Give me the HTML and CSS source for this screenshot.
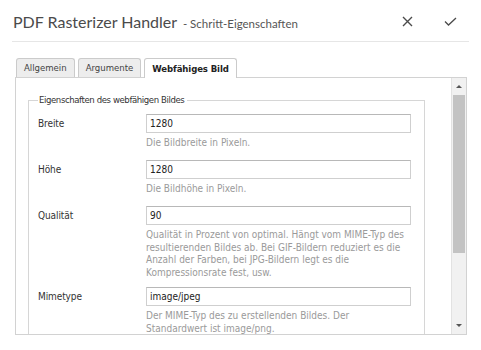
FILE: index.html
```html
<!DOCTYPE html>
<html>
<head>
<meta charset="utf-8">
<link rel="stylesheet" href="styles.css">
</head>
<body>
<div class="dialog-header">
  <div class="dialog-title">
    PDF Rasterizer Handler <span class="dialog-subtitle">- Schritt-Eigenschaften</span>
  </div>
  <div class="dialog-actions">
    <span class="dialog-btn">
      <svg width="11" height="11" viewBox="0 0 11 11"><path d="M1 1 L10 10 M10 1 L1 10" stroke="#4b4b4b" stroke-width="1.4" fill="none"/></svg>
    </span>
    <span class="dialog-btn">
      <svg width="13" height="9" viewBox="0 0 13 9"><path d="M1 4.5 L4.5 8 L12 1" stroke="#4b4b4b" stroke-width="1.3" fill="none"/></svg>
    </span>
  </div>
</div>

<div class="tabs">
  <div class="tab">Allgemein</div>
  <div class="tab">Argumente</div>
  <div class="tab tab-active">Webfähiges Bild</div>
</div>

<div class="panel">
  <div class="panel-content">
    <fieldset class="group">
      <legend class="group-legend">Eigenschaften des webfähigen Bildes</legend>

      <div class="field">
        <label class="field-label">Breite</label>
        <div class="field-body">
          <input class="field-input" type="text" value="1280">
          <div class="field-help">Die Bildbreite in Pixeln.</div>
        </div>
      </div>

      <div class="field">
        <label class="field-label">Höhe</label>
        <div class="field-body">
          <input class="field-input" type="text" value="1280">
          <div class="field-help">Die Bildhöhe in Pixeln.</div>
        </div>
      </div>

      <div class="field">
        <label class="field-label">Qualität</label>
        <div class="field-body">
          <input class="field-input" type="text" value="90">
          <div class="field-help">Qualität in Prozent von optimal. Hängt vom MIME-Typ des<br>resultierenden Bildes ab. Bei GIF-Bildern reduziert es die<br>Anzahl der Farben, bei JPG-Bildern legt es die<br>Kompressionsrate fest, usw.</div>
        </div>
      </div>

      <div class="field">
        <label class="field-label">Mimetype</label>
        <div class="field-body">
          <input class="field-input" type="text" value="image/jpeg">
          <div class="field-help">Der MIME-Typ des zu erstellenden Bildes. Der<br>Standardwert ist image/png.</div>
        </div>
      </div>
    </fieldset>
  </div>
  <div class="scrollbar">
    <div class="scroll-btn"><span class="arrow-up"></span></div>
    <div class="scroll-track"><div class="scroll-thumb"></div></div>
    <div class="scroll-btn"><span class="arrow-down"></span></div>
  </div>
</div>
</body>
</html>
```

FILE: styles.css
```css
body {
  margin: 0;
  background: #fff;
  font-family: "DejaVu Sans Condensed", "DejaVu Sans", sans-serif;
  font-size: 10px;
  color: #333;
}

/* header */
.dialog-header {
  display: flex;
  align-items: center;
  justify-content: space-between;
  height: 41px;
  margin: 0 12px;
  border-bottom: 1px solid #e6e6e6;
}
.dialog-title {
  padding: 2px 0 0 1px;
  font-family: Lato, "Open Sans", sans-serif;
  font-size: 16px;
  color: #4b4b4b;
}
.dialog-subtitle {
  margin-left: 2px;
  font-size: 11.5px;
  color: #555;
}
.dialog-actions {
  display: flex;
  gap: 19px;
  padding: 2px 7px 0 0;
}
.dialog-btn {
  display: flex;
  align-items: center;
  justify-content: center;
  width: 24px;
  height: 20px;
}

/* tabs */
.tabs {
  display: flex;
  align-items: flex-end;
  gap: 3px;
  margin: 16px 0 0 16px;
}
.tab {
  height: 18px;
  padding: 0 7px;
  line-height: 18px;
  font-size: 9.5px;
  background: #ededed;
  border: 1px solid #cbcbcb;
  border-bottom: none;
  border-radius: 3px 3px 0 0;
  color: #444;
}
.tab-active {
  height: 19px;
  line-height: 19px;
  margin-bottom: -1px;
  background: #fff;
  font-weight: bold;
  letter-spacing: -0.1px;
  color: #222;
  position: relative;
}

/* panel */
.panel {
  display: flex;
  height: 256px;
  margin: 0 14px 0 15px;
  border: 1px solid #d2d2d2;
}
.panel-content {
  flex: 1;
  overflow: hidden;
  padding: 16px 26px 0 12px;
}
.group {
  margin: 0;
  padding: 8px 13px 30px 9px;
  border: 1px solid #d6d6d6;
}
.group-legend {
  padding: 0 3px 0 1px;
  line-height: 12px;
  font-size: 9.5px;
  letter-spacing: -0.4px;
}

.field {
  display: flex;
  min-height: 39px;
  margin-bottom: 7px;
}
.field-label {
  width: 108px;
  flex: none;
  line-height: 20px;
  letter-spacing: -0.1px;
  color: #333;
}
.field-body {
  width: 265px;
}
.field-input {
  display: block;
  box-sizing: border-box;
  width: 265px;
  height: 19px;
  margin: 0;
  padding: 0 3px;
  border: 1px solid #cfcfcf;
  border-top-color: #b8b8b8;
  font-family: inherit;
  font-size: 10px;
  color: #222;
  outline: none;
}
.field-help {
  margin-top: 4px;
  line-height: 12.7px;
  color: #9a9a9a;
}

/* scrollbar */
.scrollbar {
  display: flex;
  flex-direction: column;
  width: 14px;
  background: #f1f1f1;
  border-left: 1px solid #e2e2e2;
}
.scroll-btn {
  display: flex;
  align-items: center;
  justify-content: center;
  height: 17px;
}
.scroll-track {
  flex: 1;
  padding: 0 1px;
}
.scroll-thumb {
  height: 158px;
  background: #c3c3c3;
}
.arrow-up,
.arrow-down {
  width: 0;
  height: 0;
  border-left: 3px solid transparent;
  border-right: 3px solid transparent;
}
.arrow-up {
  border-bottom: 3px solid #555;
}
.arrow-down {
  border-top: 3px solid #555;
}
```
